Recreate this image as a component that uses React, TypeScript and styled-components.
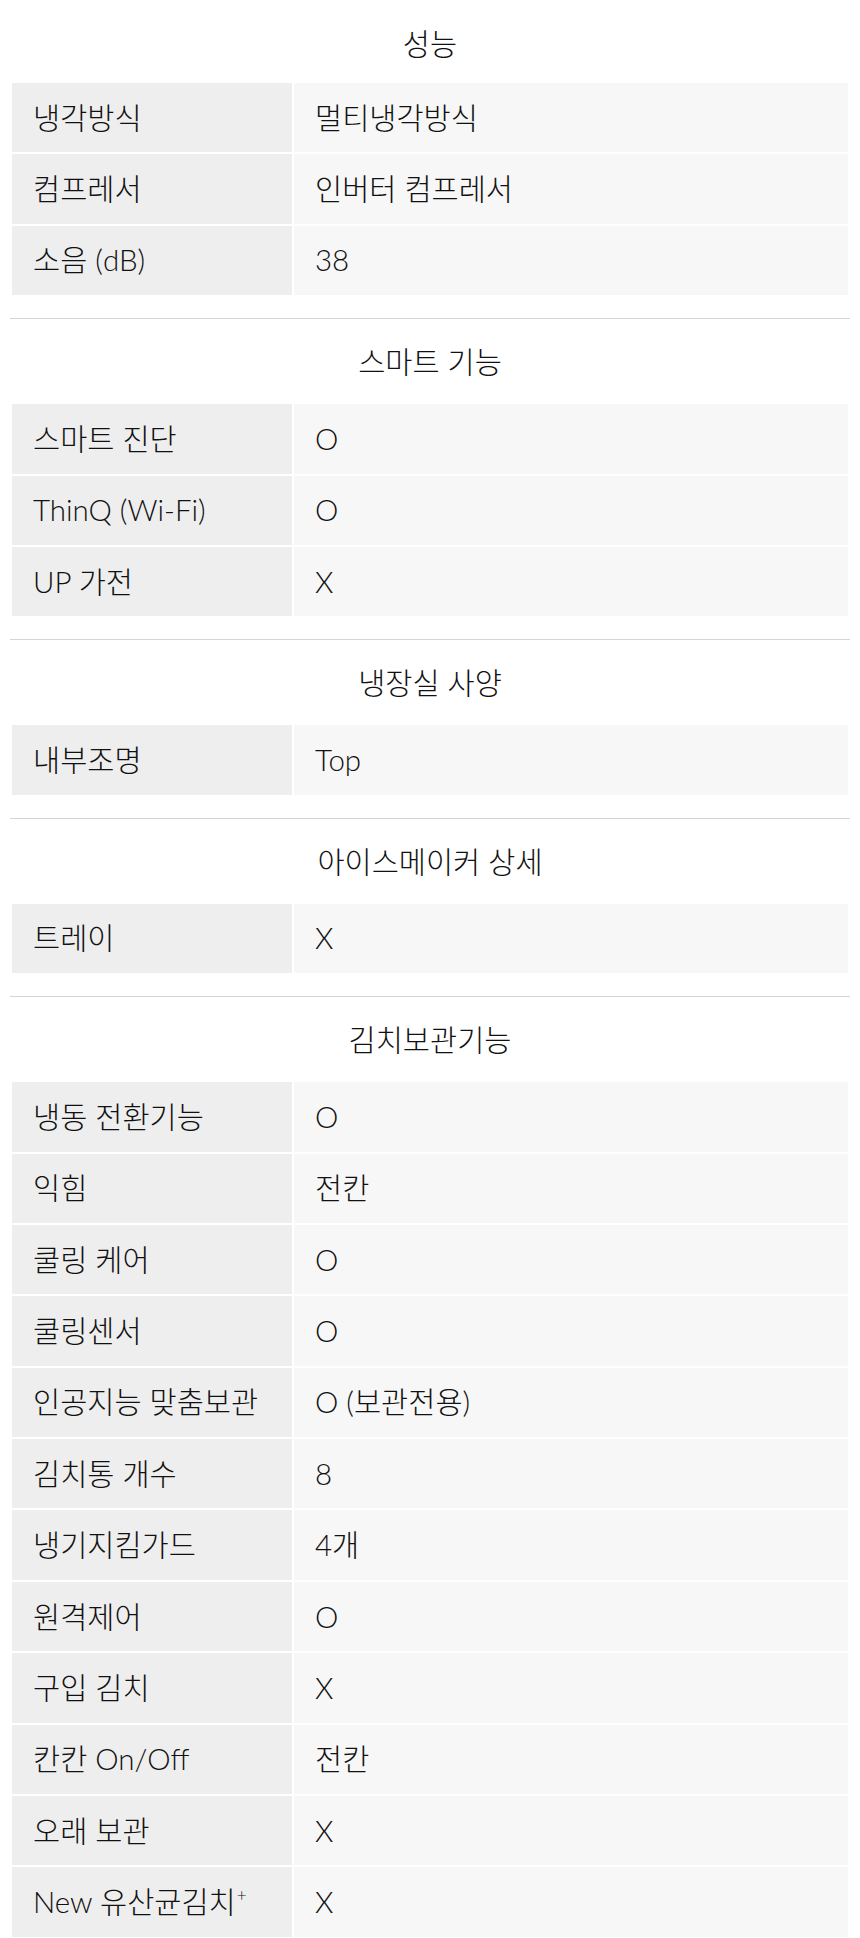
import styled, { createGlobalStyle } from 'styled-components';

type Row = { label: string; value: string; sup?: boolean };
type Section = { title: string; rows: Row[] };

const sections: Section[] = [
  {
    title: '성능',
    rows: [
      { label: '냉각방식', value: '멀티냉각방식' },
      { label: '컴프레서', value: '인버터 컴프레서' },
      { label: '소음 (dB)', value: '38' },
    ],
  },
  {
    title: '스마트 기능',
    rows: [
      { label: '스마트 진단', value: 'O' },
      { label: 'ThinQ (Wi-Fi)', value: 'O' },
      { label: 'UP 가전', value: 'X' },
    ],
  },
  {
    title: '냉장실 사양',
    rows: [{ label: '내부조명', value: 'Top' }],
  },
  {
    title: '아이스메이커 상세',
    rows: [{ label: '트레이', value: 'X' }],
  },
  {
    title: '김치보관기능',
    rows: [
      { label: '냉동 전환기능', value: 'O' },
      { label: '익힘', value: '전칸' },
      { label: '쿨링 케어', value: 'O' },
      { label: '쿨링센서', value: 'O' },
      { label: '인공지능 맞춤보관', value: 'O (보관전용)' },
      { label: '김치통 개수', value: '8' },
      { label: '냉기지킴가드', value: '4개' },
      { label: '원격제어', value: 'O' },
      { label: '구입 김치', value: 'X' },
      { label: '칸칸 On/Off', value: '전칸' },
      { label: '오래 보관', value: 'X' },
      { label: 'New 유산균김치', value: 'X', sup: true },
    ],
  },
];

const App = () => {
  return (
    <>
      <GlobalStyle />
      <Container>
        {sections.map((section, i) => (
          <SpecSection key={section.title} $first={i === 0}>
            <SectionTitle $first={i === 0}>{section.title}</SectionTitle>
            <SpecTable>
              <colgroup>
                <col style={{ width: 280 }} />
                <col />
              </colgroup>
              <tbody>
                {section.rows.map((row) => (
                  <tr key={row.label}>
                    <LabelCell>
                      {row.label}
                      {row.sup && <Sup>+</Sup>}
                    </LabelCell>
                    <ValueCell>{row.value}</ValueCell>
                  </tr>
                ))}
              </tbody>
            </SpecTable>
          </SpecSection>
        ))}
      </Container>
    </>
  );
};

const GlobalStyle = createGlobalStyle`
  body {
    margin: 0;
    background: #fff;
    font-family: Lato, "Noto Sans CJK KR", "Noto Sans", sans-serif;
    color: #111;
  }
`;

const Container = styled.div`
  padding: 0 10px;
`;

const SpecSection = styled.section<{ $first: boolean }>`
  padding-bottom: 21px;
  border-top: ${({ $first }) => ($first ? 'none' : '1.5px solid #d4d4d4')};
`;

const SectionTitle = styled.h3<{ $first: boolean }>`
  margin: 0;
  padding: ${({ $first }) => ($first ? '27px 0 20px' : '26px 0 23px')};
  height: 34px;
  line-height: 34px;
  text-align: center;
  font-size: 29.5px;
  font-weight: 300;
  color: #111;
`;

const SpecTable = styled.table`
  width: 100%;
  table-layout: fixed;
  border-collapse: separate;
  border-spacing: 2px;
`;

const LabelCell = styled.td`
  height: 69.4px;
  padding: 0 0 0 21px;
  background: #eeeeee;
  font-size: 29.5px;
  font-weight: 300;
  line-height: 34px;
  vertical-align: middle;
  white-space: nowrap;
`;

const ValueCell = styled.td`
  height: 69.4px;
  padding: 0 0 0 21px;
  background: #f7f7f7;
  font-size: 29.5px;
  font-weight: 300;
  line-height: 34px;
  vertical-align: middle;
`;

const Sup = styled.sup`
  font-size: 17px;
  line-height: 0;
  vertical-align: 12px;
  margin-left: 1px;
`;

export default App;
